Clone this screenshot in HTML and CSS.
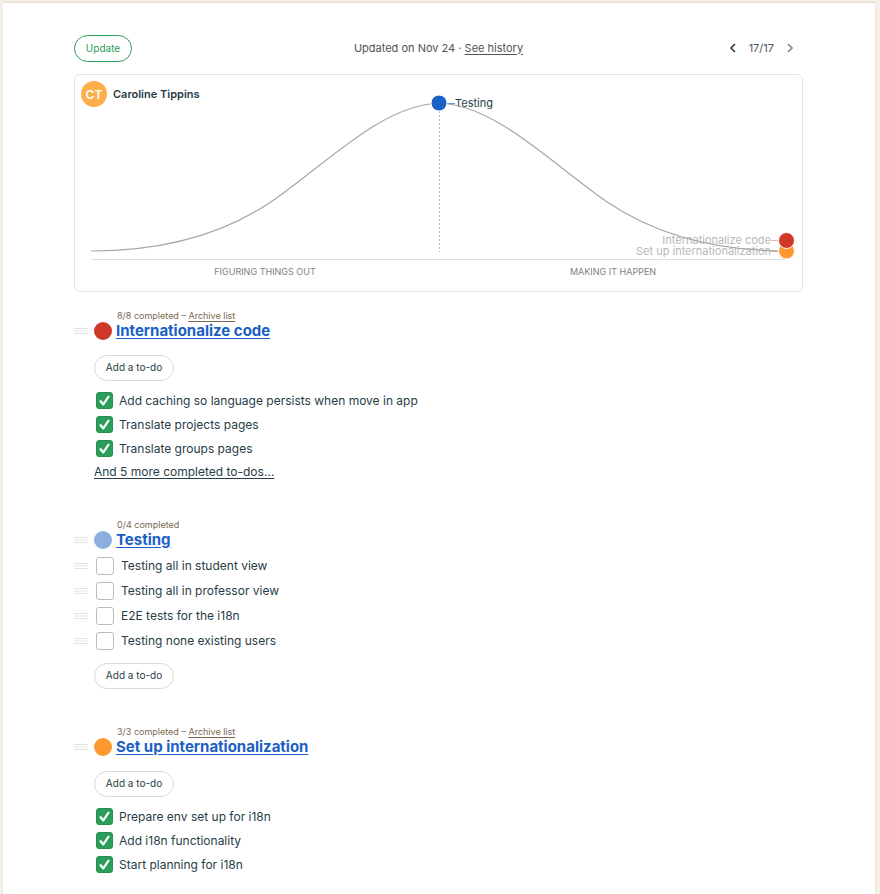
FILE: index.html
```html
<!DOCTYPE html>
<html lang="en">
<head>
<meta charset="utf-8">
<meta name="viewport" content="width=device-width, initial-scale=1">
<title>Hill chart to-dos</title>
<link rel="stylesheet" href="styles.css">
</head>
<body>
<svg class="defs" aria-hidden="true">
  <symbol id="grip" viewBox="0 0 14 6"><path d="M0 .5h14M0 3h14M0 5.5h14" stroke="#e4e4e4" stroke-width="1"/></symbol>
  <symbol id="check" viewBox="0 0 18 18"><path d="M4.8 9.8l3 3.4L13.2 5" fill="none" stroke="#fff" stroke-width="2.3" stroke-linecap="round" stroke-linejoin="round"/></symbol>
</svg>
<main class="sheet">
  <header class="toolbar">
    <button class="btn btn-update" type="button">Update</button>
    <p class="updated">Updated on Nov 24 · <a href="#">See history</a></p>
    <nav class="pager" aria-label="History">
      <button class="arrow" type="button" aria-label="Previous"><svg viewBox="0 0 8 10"><path d="M6 1L2 5l4 4"/></svg></button>
      <span>17/17</span>
      <button class="arrow arrow-off" type="button" aria-label="Next" disabled><svg viewBox="0 0 8 10"><path d="M2 1l4 4-4 4"/></svg></button>
    </nav>
  </header>

  <section class="card">
    <div class="person"><span class="avatar">CT</span>Caroline Tippins</div>
    <svg class="hill" viewBox="0 0 727 216" role="img" aria-label="Hill chart">
      <path class="base" d="M16 184.500H711"/>
      <path class="mid" d="M364.500 36V177"/>
      <text class="phase" x="190" y="200">FIGURING THINGS OUT</text>
      <text class="phase" x="538" y="200">MAKING IT HAPPEN</text>
      <text class="name faded" x="696" y="180">Set up internationalization</text>
      <text class="name faded" x="696" y="169">Internationalize code</text>
      <text class="name" x="380" y="32">Testing</text>
      <path class="curve" d="M16 176C80 176 143 162.500 195 127.500C247 92.500 308 28.500 364 28.500C420 28.500 481 92.500 533 127.500C585 162.500 648 176 711 176"/>
      <path class="lead lead-orange" d="M696 176.500h8"/>
      <path class="lead lead-red" d="M696 165.500h8"/>
      <path class="lead lead-blue" d="M370 28.500h10"/>
      <circle class="dot-orange" cx="711.500" cy="176" r="8"/>
      <circle class="dot-red" cx="711.500" cy="165.500" r="8"/>
      <circle class="dot-blue" cx="364" cy="28" r="8"/>
    </svg>
  </section>

  <section class="list">
    <p class="meta">8/8 completed – <a href="#">Archive list</a></p>
    <div class="head"><svg class="grip"><use href="#grip"/></svg><span class="bullet red"></span><h2><a href="#">Internationalize code</a></h2></div>
    <button class="btn add add-top" type="button">Add a to-do</button>
    <ul class="done">
      <li><label class="todo"><span class="box"><input type="checkbox" checked><svg><use href="#check"/></svg></span>Add caching so language persists when move in app</label></li>
      <li><label class="todo"><span class="box"><input type="checkbox" checked><svg><use href="#check"/></svg></span>Translate projects pages</label></li>
      <li><label class="todo"><span class="box"><input type="checkbox" checked><svg><use href="#check"/></svg></span>Translate groups pages</label></li>
    </ul>
    <p class="more"><a href="#">And 5 more completed to-dos…</a></p>
  </section>

  <section class="list">
    <p class="meta">0/4 completed</p>
    <div class="head"><svg class="grip"><use href="#grip"/></svg><span class="bullet blue"></span><h2><a href="#">Testing</a></h2></div>
    <ul class="open">
      <li><svg class="grip"><use href="#grip"/></svg><label class="todo"><span class="box"><input type="checkbox"></span>Testing all in student view</label></li>
      <li><svg class="grip"><use href="#grip"/></svg><label class="todo"><span class="box"><input type="checkbox"></span>Testing all in professor view</label></li>
      <li><svg class="grip"><use href="#grip"/></svg><label class="todo"><span class="box"><input type="checkbox"></span>E2E tests for the i18n</label></li>
      <li><svg class="grip"><use href="#grip"/></svg><label class="todo"><span class="box"><input type="checkbox"></span>Testing none existing users</label></li>
    </ul>
    <button class="btn add add-bottom" type="button">Add a to-do</button>
  </section>

  <section class="list">
    <p class="meta">3/3 completed – <a href="#">Archive list</a></p>
    <div class="head"><svg class="grip"><use href="#grip"/></svg><span class="bullet orange"></span><h2><a href="#">Set up internationalization</a></h2></div>
    <button class="btn add add-top" type="button">Add a to-do</button>
    <ul class="done">
      <li><label class="todo"><span class="box"><input type="checkbox" checked><svg><use href="#check"/></svg></span>Prepare env set up for i18n</label></li>
      <li><label class="todo"><span class="box"><input type="checkbox" checked><svg><use href="#check"/></svg></span>Add i18n functionality</label></li>
      <li><label class="todo"><span class="box"><input type="checkbox" checked><svg><use href="#check"/></svg></span>Start planning for i18n</label></li>
    </ul>
  </section>
</main>
</body>
</html>
```
FILE: styles.css
```css
* { box-sizing: border-box; }

body {
  margin: 0;
  padding: 2px 5px 0 3px;
  background: #f6f0e8;
  color: #283c46;
  font-family: Inter, "Liberation Sans", sans-serif;
  font-size: 12px;
}

h2, p, ul { margin: 0; padding: 0; }
ul { list-style: none; }
a { color: inherit; text-underline-offset: 2px; }
button { font-family: inherit; cursor: pointer; }
.defs { position: absolute; width: 0; height: 0; }

.sheet {
  min-height: 892px;
  padding: 32px 72px 17px 71px;
  border-top: 1px solid #e2dfd6;
  background: #fff;
  box-shadow: 0 0 3px #e6dfd5;
}

.toolbar {
  display: grid;
  grid-template-columns: 1fr auto 1fr;
  align-items: center;
  margin-bottom: 12px;
  color: #4f5457;
  font-size: 11px;
}

.updated, .pager { padding-bottom: 2px; }

.btn {
  border: 1px solid #d7d9da;
  border-radius: 14px;
  padding: 0 0 2px;
  background: #fff;
  color: #283c46;
  font-size: 10px;
  line-height: 14px;
}

.btn-update {
  justify-self: start;
  width: 58px;
  height: 27px;
  border-color: #2a9d58;
  color: #2a9d58;
}

.pager {
  display: flex;
  align-items: center;
  justify-content: flex-end;
  gap: 12px;
  padding-right: 9px;
}

.arrow {
  display: flex;
  padding: 0;
  border: 0;
  background: none;
  color: #283c46;
}
.arrow svg { width: 8px; height: 10px; fill: none; stroke: currentColor; stroke-width: 1.6; }
.arrow-off { color: #7d8385; }

.card {
  position: relative;
  border: 1px solid #e2e4e5;
  border-radius: 6px;
}

.person {
  position: absolute;
  top: 6px;
  left: 6px;
  display: flex;
  align-items: center;
  gap: 6px;
  font-size: 11px;
  font-weight: 600;
}

.avatar {
  display: grid;
  place-items: center;
  width: 26px;
  height: 26px;
  border-radius: 50%;
  background: #ffae4c;
  color: #fff;
  font-size: 12px;
}

.hill { display: block; width: 100%; height: auto; }
.curve { fill: none; stroke: #a6a6a6; stroke-width: 1.2; }
.base { stroke: #dfdfdf; }
.mid { stroke: #bbb; stroke-dasharray: 2 2; }
.phase { fill: #7e8183; font-size: 9px; text-anchor: middle; }
.name { fill: #283c46; font-size: 11px; }
.name.faded { fill: #b5b9bb; text-anchor: end; }
.lead-orange { stroke: #d3a676; }
.lead-red { stroke: #edb5ae; }
.lead-blue { stroke: #6a95d6; stroke-width: 1; }
.hill circle { stroke: #fff; stroke-width: 1; }
.dot-orange { fill: #ff9830; }
.dot-red { fill: #cf3a28; }
.dot-blue { fill: #1b60c4; }

.list { margin-bottom: 37px; }
.card + .list { margin-top: 18px; }

.meta {
  padding-left: 43px;
  color: #796850;
  font-size: 9px;
  line-height: 12px;
}

.head { display: flex; align-items: center; height: 18px; }
.head h2 {
  margin-left: 5px;
  color: #1b60c4;
  font-size: 15px;
  font-weight: 700;
  line-height: 18px;
}

.head h2, .done, .more { font-variation-settings: "opsz" 24; }

.grip { flex: none; width: 14px; height: 6px; margin-right: 6px; }

.bullet { width: 18px; height: 18px; margin-right: -1px; border-radius: 50%; }
.red { background: #cf3a28; }
.blue { background: #8dafe0; }
.orange { background: #ff9830; }

.add { display: block; width: 80px; height: 26px; margin-left: 20px; }
.add-top { margin-top: 15px; margin-bottom: 8px; }
.add-bottom { margin-top: 10px; }

.todo { display: flex; align-items: center; line-height: 18px; }
.done { padding-left: 22px; }
.done .todo { gap: 5px; padding: 3px 0; }
.open { padding-top: 4px; }
.open li { display: flex; align-items: center; padding: 4px 0 3px; }
.open .todo { gap: 7px; margin-left: 2px; }

.box { position: relative; display: flex; width: 18px; height: 18px; }
.box input {
  appearance: none;
  width: 18px;
  height: 18px;
  margin: 0;
  border: 1px solid #b9bcbe;
  border-radius: 3px;
  background: #fff;
}
.box input:checked { width: 17px; height: 17px; border-color: #248f4e; background: #2a9d58; }
.box svg { position: absolute; inset: 0; width: 17px; height: 17px; pointer-events: none; }

.more { margin-top: 1px; padding-left: 20px; line-height: 20px; }
```
